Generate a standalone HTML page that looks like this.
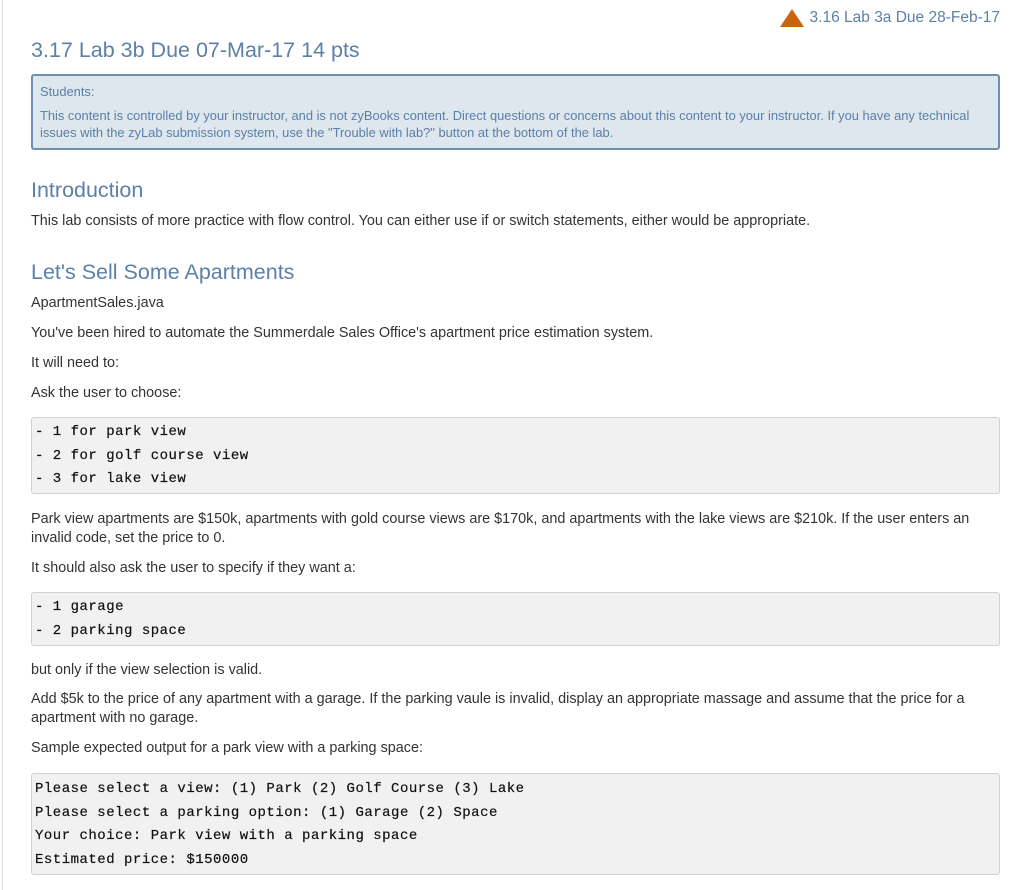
<!DOCTYPE html>
<html><head><meta charset="utf-8"><style>
body{margin:0;width:1024px;height:890px;background:#fff;position:relative;overflow:hidden;font-family:"Liberation Sans",sans-serif;color:#333;}
.a{position:absolute;white-space:nowrap;}
.p{position:absolute;left:31px;font-size:14.4px;line-height:19px;white-space:nowrap;}
.h{position:absolute;left:31px;color:#5c80a8;font-size:21.5px;}
.code{position:absolute;left:31px;width:967px;background:#f1f1f1;border:1px solid #d0d0d0;border-radius:3px;}
.cl{position:absolute;left:3px;font-family:"Liberation Mono",monospace;font-size:14px;letter-spacing:0.5px;color:#111;-webkit-text-stroke:0.2px #111;}
</style></head><body>
<div style="position:absolute;left:2px;top:0;width:1px;height:890px;background:#ddd"></div>
<svg class="a" style="left:780px;top:9px" width="24" height="18"><polygon points="12,0 24,18 0,18" fill="#c86410"/></svg>
<div class="a" style="right:24px;top:9px;font-size:15.5px;color:#5c80a8">3.16 Lab 3a Due 28-Feb-17</div>
<div class="h" style="top:38px">3.17 Lab 3b Due 07-Mar-17 14 pts</div>
<div style="position:absolute;left:31px;top:74px;width:965px;height:72px;background:#dee6ee;border:2px solid #6e90b6;border-radius:3px"></div>
<div class="a" style="left:40px;top:84px;font-size:12.9px;color:#5c80a8">Students:</div>
<div class="a" style="left:40px;top:108px;font-size:12.9px;line-height:16.5px;color:#5c80a8">This content is controlled by your instructor, and is not zyBooks content. Direct questions or concerns about this content to your instructor. If you have any technical<br>issues with the zyLab submission system, use the "Trouble with lab?" button at the bottom of the lab.</div>
<div class="h" style="top:178px">Introduction</div>
<div class="p" style="top:212px">This lab consists of more practice with flow control. You can either use if or switch statements, either would be appropriate.</div>
<div class="h" style="top:260px">Let's Sell Some Apartments</div>
<div class="p" style="top:294px">ApartmentSales.java</div>
<div class="p" style="top:324px">You've been hired to automate the Summerdale Sales Office's apartment price estimation system.</div>
<div class="p" style="top:354px">It will need to:</div>
<div class="p" style="top:384px">Ask the user to choose:</div>
<div class="code" style="top:417px;height:75px">
<div class="cl" style="top:6px">- 1 for park view</div>
<div class="cl" style="top:30px">- 2 for golf course view</div>
<div class="cl" style="top:53px">- 3 for lake view</div></div>
<div class="p" style="top:510px">Park view apartments are $150k, apartments with gold course views are $170k, and apartments with the lake views are $210k. If the user enters an<br>invalid code, set the price to 0.</div>
<div class="p" style="top:559px">It should also ask the user to specify if they want a:</div>
<div class="code" style="top:592px;height:52px">
<div class="cl" style="top:6px">- 1 garage</div>
<div class="cl" style="top:30px">- 2 parking space</div></div>
<div class="p" style="top:661px">but only if the view selection is valid.</div>
<div class="p" style="top:690px">Add $5k to the price of any apartment with a garage. If the parking vaule is invalid, display an appropriate massage and assume that the price for a<br>apartment with no garage.</div>
<div class="p" style="top:739px">Sample expected output for a park view with a parking space:</div>
<div class="code" style="top:773px;height:100px">
<div class="cl" style="top:7px">Please select a view: (1) Park (2) Golf Course (3) Lake</div>
<div class="cl" style="top:31px">Please select a parking option: (1) Garage (2) Space</div>
<div class="cl" style="top:54px">Your choice: Park view with a parking space</div>
<div class="cl" style="top:78px">Estimated price: $150000</div></div>
</body></html>
